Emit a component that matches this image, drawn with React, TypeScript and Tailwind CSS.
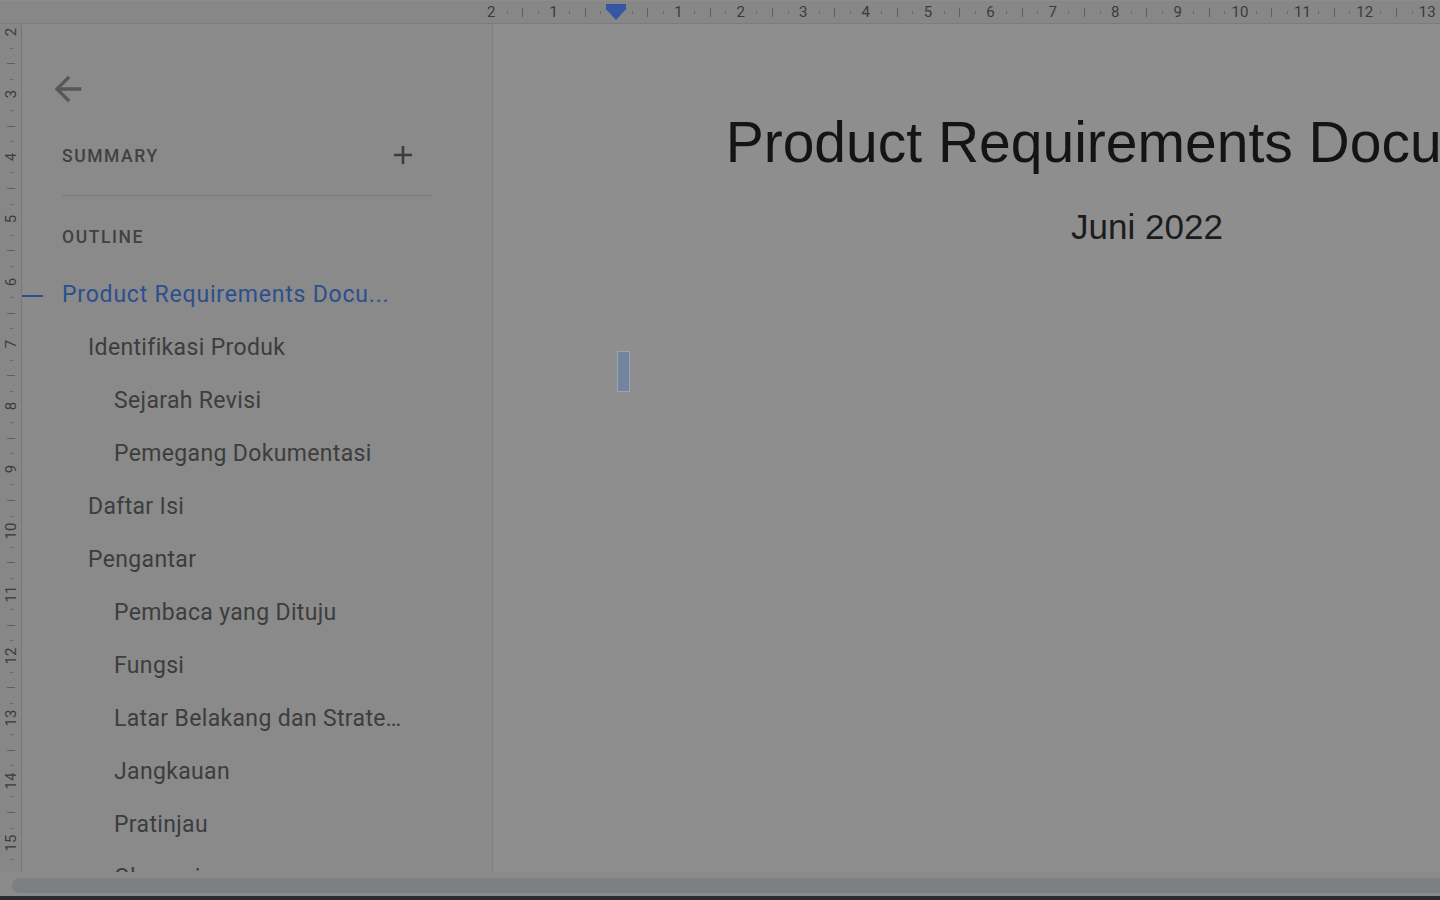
import React from 'react';

const UNIT = 62.4;
const ORIGIN = 616;

type OutlineItem = { label: string; level: 1 | 2 | 3; active?: boolean };

const outline: OutlineItem[] = [
  { label: 'Product Requirements Docu...', level: 1, active: true },
  { label: 'Identifikasi Produk', level: 2 },
  { label: 'Sejarah Revisi', level: 3 },
  { label: 'Pemegang Dokumentasi', level: 3 },
  { label: 'Daftar Isi', level: 2 },
  { label: 'Pengantar', level: 2 },
  { label: 'Pembaca yang Dituju', level: 3 },
  { label: 'Fungsi', level: 3 },
  { label: 'Latar Belakang dan Strate…', level: 3 },
  { label: 'Jangkauan', level: 3 },
  { label: 'Pratinjau', level: 3 },
  { label: 'Glossarium', level: 3 },
];

const indent: Record<number, string> = {
  1: 'pl-0',
  2: 'pl-[26px]',
  3: 'pl-[52px]',
};

function TopRuler() {
  const numbers: number[] = [];
  for (let n = -2; n <= 13; n++) if (n !== 0) numbers.push(n);
  const ticks: { x: number; long: boolean }[] = [];
  for (let n = -2; n <= 13; n++) {
    for (let q = 1; q <= 3; q++) {
      const x = ORIGIN + (n + q / 4) * UNIT;
      if (x < 1440) ticks.push({ x, long: q === 2 });
    }
  }

  return (
    <div className="relative h-[24px] shrink-0 bg-[#878787] border-b border-[#7c7c7c] border-t border-t-[#8c8c8c] overflow-hidden">
      {numbers.map((n) => (
        <span
          key={n}
          className="absolute top-[2px] w-[20px] -ml-[10px] text-center text-[15px] leading-[18px] text-[#3b3b3b]"
          style={{ left: ORIGIN + n * UNIT }}
        >
          {Math.abs(n)}
        </span>
      ))}
      {ticks.map((t, i) => (
        <span
          key={i}
          className={
            t.long
              ? 'absolute top-[7px] h-[9px] w-px bg-[#5f5f5f]'
              : 'absolute top-[10px] h-[3px] w-px bg-[#666666]'
          }
          style={{ left: Math.round(t.x) }}
        />
      ))}
      {/* left indent marker */}
      <div className="absolute left-[606px] top-[3px] flex flex-col items-center">
        <div className="h-[6px] w-[20px] bg-[#3556a0]" />
        <svg width="20" height="11" viewBox="0 0 20 11" className="-mt-px">
          <path d="M0 0 H20 L10 11 Z" fill="#3556a0" />
        </svg>
      </div>
    </div>
  );
}

function SideRuler() {
  const numbers: number[] = [];
  for (let n = 2; n <= 15; n++) numbers.push(n);
  const ticks: { y: number; long: boolean }[] = [];
  for (let n = 2; n <= 15; n++) {
    for (let q = 1; q <= 3; q++) {
      const y = 8 + (n - 2 + q / 4) * UNIT;
      if (y < 846) ticks.push({ y, long: q === 2 });
    }
  }

  return (
    <div className="relative w-[22px] shrink-0 bg-[#878787] border-r border-[#787878] overflow-hidden">
      {numbers.map((n) => (
        <span
          key={n}
          className="absolute left-[1px] w-[20px] h-[20px] -mt-[10px] flex items-center justify-center text-[15px] leading-none text-[#3b3b3b] -rotate-90"
          style={{ top: 8 + (n - 2) * UNIT }}
        >
          {n}
        </span>
      ))}
      {ticks.map((t, i) => (
        <span
          key={i}
          className={
            t.long
              ? 'absolute left-[7px] w-[8px] h-px bg-[#5f5f5f]'
              : 'absolute left-[10px] w-[3px] h-px bg-[#666666]'
          }
          style={{ top: Math.round(t.y) }}
        />
      ))}
    </div>
  );
}

function Sidebar() {
  return (
    <aside className="w-[471px] shrink-0 bg-[#898a89] border-r border-[#808080] overflow-hidden pl-[40px] font-['Roboto','Liberation_Sans',sans-serif]">
      <button className="mt-[45px] -ml-[14px] block">
        <svg width="40" height="40" viewBox="0 0 24 24" fill="#575757">
          <path d="M20 11H7.83l5.59-5.59L12 4l-8 8 8 8 1.41-1.41L7.83 13H20v-2z" />
        </svg>
      </button>

      <div className="mt-[27px] flex h-[40px] w-[370px] items-center justify-between">
        <span className="text-[17.5px] font-medium tracking-[0.09em] text-[#414141]">SUMMARY</span>
        <span className="mr-[9px] -mt-[3px] flex h-[40px] w-[40px] items-center justify-center">
          <svg width="18" height="18" viewBox="0 0 18 18">
            <path d="M9 0v18M0 9h18" stroke="#3c3c3c" strokeWidth="2.6" />
          </svg>
        </span>
      </div>

      <div className="mt-[19px] h-px w-[370px] bg-[#7b7b7b]" />

      <div className="mt-[21px] flex h-[40px] items-center">
        <span className="text-[17.5px] font-medium tracking-[0.09em] text-[#414141]">OUTLINE</span>
      </div>

      <ul className="mt-[12px]">
        {outline.map((item) => (
          <li
            key={item.label}
            className={`relative flex h-[53px] w-[370px] items-center ${indent[item.level]}`}
          >
            {item.active && (
              <span className="absolute left-[-40px] top-1/2 h-[2px] w-[21px] -translate-y-1/2 bg-[#2d4f8f]" />
            )}
            <span
              className={`truncate text-[23px] ${
                item.active ? 'tracking-[0.035em] text-[#2c4f8e]' : 'tracking-[0.015em] text-[#3d3d3d]'
              }`}
            >
              {item.label}
            </span>
          </li>
        ))}
      </ul>
    </aside>
  );
}

function Document() {
  return (
    <main className="flex-1 min-w-0 overflow-hidden bg-[#8e8e8e]">
      <div className="w-[1308px] px-[123px] font-['Liberation_Sans',Arial,sans-serif] text-center">
        <h1 className="mt-[90px] whitespace-nowrap text-[57px] leading-none text-[#141414]">
          Product Requirements Document
        </h1>
        <p className="mt-[38px] text-[35px] leading-none text-[#1c1c1c]">Juni 2022</p>
        <div className="mt-[107px] ml-px h-[41px] w-[13px] border border-[#97a3b8] bg-[#74849f]" />
      </div>
    </main>
  );
}

export default function App() {
  return (
    <div className="flex h-[900px] w-[1440px] flex-col overflow-hidden bg-[#8a8b8a] font-['Roboto','Liberation_Sans',sans-serif]">
      <TopRuler />
      <div className="flex h-[848px] shrink-0">
        <SideRuler />
        <Sidebar />
        <Document />
      </div>
      <div className="flex h-[24px] shrink-0 items-center pl-[12px] pt-[2px]">
        <div className="h-[15px] flex-1 rounded-l-full bg-[#7e7f80]" />
      </div>
      <div className="h-[4px] shrink-0 bg-[#2b2b2b]" />
    </div>
  );
}
